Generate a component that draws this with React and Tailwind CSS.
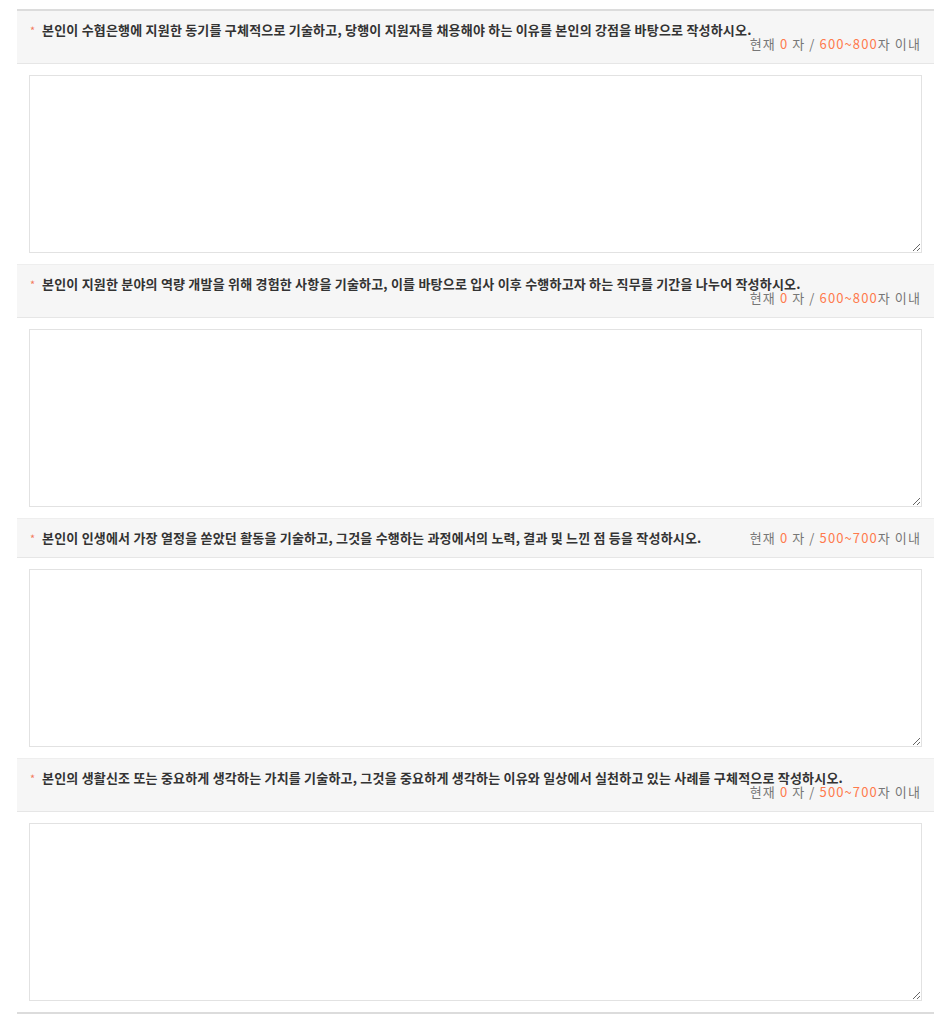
import React from "react";

const items = [
  { q: "본인이 수협은행에 지원한 동기를 구체적으로 기술하고, 당행이 지원자를 채용해야 하는 이유를 본인의 강점을 바탕으로 작성하시오.", range: "600~800" },
  { q: "본인이 지원한 분야의 역량 개발을 위해 경험한 사항을 기술하고, 이를 바탕으로 입사 이후 수행하고자 하는 직무를 기간을 나누어 작성하시오.", range: "600~800" },
  { q: "본인이 인생에서 가장 열정을 쏟았던 활동을 기술하고, 그것을 수행하는 과정에서의 노력, 결과 및 느낀 점 등을 작성하시오.", range: "500~700" },
  { q: "본인의 생활신조 또는 중요하게 생각하는 가치를 기술하고, 그것을 중요하게 생각하는 이유와 일상에서 실천하고 있는 사례를 구체적으로 작성하시오.", range: "500~700" },
];

export default function App() {
  return (
    <div className="bg-white min-h-[1024px] pt-[9px]" style={{ fontFamily: '"Noto Sans CJK KR", "Noto Sans", sans-serif' }}>
      <div className="ml-[17px] w-[917px] border-t-2 border-b-2 border-[#dcdcdc]">
        {items.map((it, i) => (
          <div key={i} className={i > 0 ? "border-t border-[#eeeeee]" : ""}>
            <div className="flex flex-wrap justify-between bg-[#f6f6f6] border-b border-[#e6e6e6] px-[13px] pt-[12px] pb-[12px] text-[13px] leading-[14px]">
              <div className="flex items-start text-[#333] font-bold tracking-[0.2px]">
                <span className="text-[#f37a5e] font-normal text-[11px] w-[12px] shrink-0">*</span>
                <span>{it.q}</span>
              </div>
              <div className="ml-auto text-[#777] tracking-[1.1px] whitespace-nowrap">
                현재 <span className="text-[#ff7a4c]">0</span> 자 / <span className="text-[#ff7a4c]">{it.range}</span>자 이내
              </div>
            </div>
            <div className="px-[12px] py-[11px]">
              <textarea className="block w-full h-[178px] border border-[#e2e2e2] bg-white outline-none" />
            </div>
          </div>
        ))}
      </div>
    </div>
  );
}
